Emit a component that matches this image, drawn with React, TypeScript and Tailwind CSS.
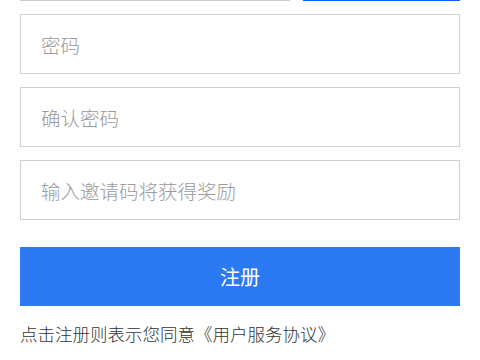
export default function App() {
  const font = { fontFamily: '"Noto Sans CJK SC", "Noto Sans", sans-serif' };
  return (
    <div className="w-[480px] h-[360px] overflow-hidden bg-white" style={font}>
      <div className="px-5 flex flex-col">
        {/* 验证码行（已滚出视口） */}
        <div className="-mt-[59px] h-[60px] flex gap-[13px]">
          <div className="w-[270px] h-full border border-[#cccccc]"></div>
          <div className="flex-1 h-full bg-[#0b63f6]"></div>
        </div>

        <input
          className="mt-[13px] h-[60px] w-full border border-[#d0d0d0] px-5 text-[19.5px] font-light outline-none placeholder:text-[#9a9a9a]"
          placeholder="密码"
          type="password"
        />
        <input
          className="mt-[13px] h-[60px] w-full border border-[#d0d0d0] px-5 text-[19.5px] font-light outline-none placeholder:text-[#9a9a9a]"
          placeholder="确认密码"
          type="password"
        />
        <input
          className="mt-[13px] h-[60px] w-full border border-[#d0d0d0] px-5 text-[19.5px] font-light outline-none placeholder:text-[#9a9a9a]"
          placeholder="输入邀请码将获得奖励"
        />

        <button className="mt-[27px] h-[59px] w-full bg-[#2b7af3] text-white text-[20px]">
          注册
        </button>

        <p className="mt-[19px] text-[17.5px] font-light text-[#333333] leading-none">
          点击注册则表示您同意《用户服务协议》
        </p>
      </div>
    </div>
  );
}
